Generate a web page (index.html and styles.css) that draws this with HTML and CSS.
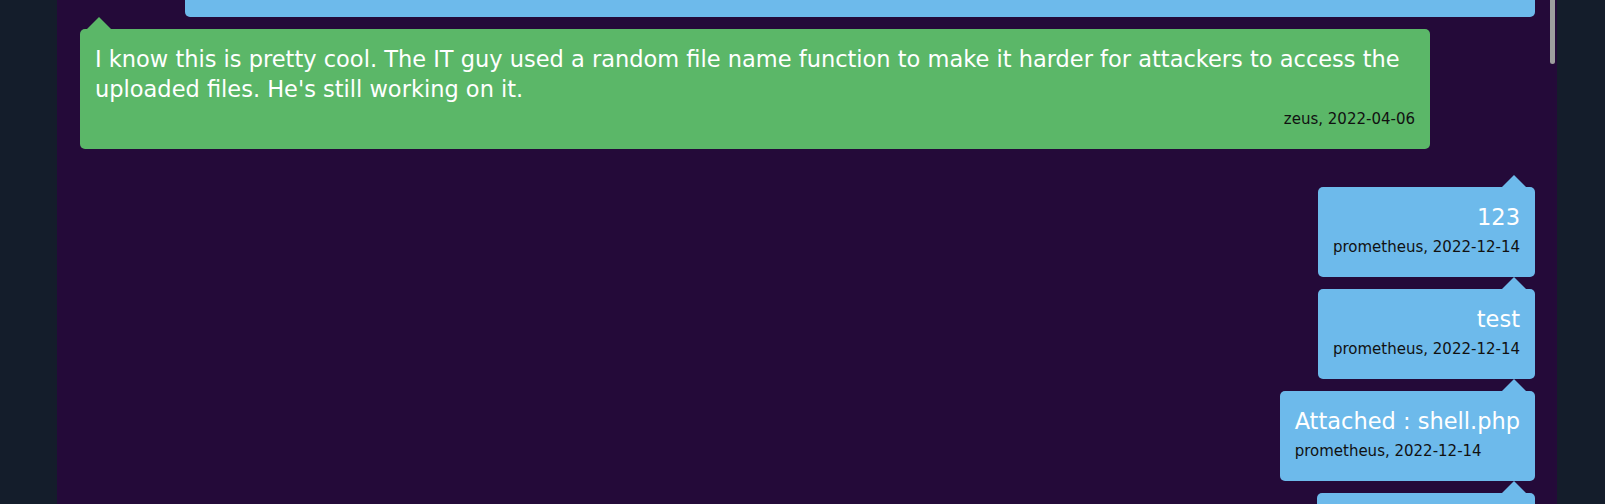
FILE: index.html
```html
<!DOCTYPE html>
<html lang="en">
<head>
<meta charset="utf-8">
<title>Messages</title>
<link rel="stylesheet" href="styles.css">
</head>
<body>
<div class="page">
  <aside class="side"></aside>
  <main class="chat">
    <div class="thread">
      <div class="bubble bubble-out bubble-cut"></div>
      <div class="bubble bubble-in">
        <p class="text">I know this is pretty cool. The IT guy used a random file name function to make it harder for attackers to access the uploaded files. He's still working on it.</p>
        <span class="meta">zeus, 2022-04-06</span>
      </div>
      <div class="bubble bubble-out bubble-first">
        <p class="text">123</p>
        <span class="meta">prometheus, 2022-12-14</span>
      </div>
      <div class="bubble bubble-out">
        <p class="text">test</p>
        <span class="meta">prometheus, 2022-12-14</span>
      </div>
      <div class="bubble bubble-out">
        <p class="text">Attached : shell.php</p>
        <span class="meta meta-left">prometheus, 2022-12-14</span>
      </div>
      <div class="bubble bubble-out bubble-tail"></div>
    </div>
    <div class="scroll-thumb"></div>
  </main>
  <aside class="side side-right"></aside>
</div>
</body>
</html>
```
FILE: styles.css
```css
html, body {
  margin: 0;
  padding: 0;
  height: 504px;
  overflow: hidden;
  background: #141d2b;
  font-family: "DejaVu Sans", "Liberation Sans", sans-serif;
}

.page {
  display: flex;
  height: 504px;
}

.side {
  width: 57px;
  flex: none;
  background: #141d2b;
}

.side-right {
  width: 48px;
}

.chat {
  position: relative;
  width: 1500px;
  flex: none;
  background: #240a39;
  overflow: hidden;
}

.thread {
  display: flex;
  flex-direction: column;
  gap: 12px;
  padding: 0 22px 0 23px;
}

.bubble {
  position: relative;
  max-width: 1350px;
  box-sizing: border-box;
  padding: 15px 15px;
  border-radius: 5px;
  color: #ffffff;
}

.bubble::before {
  content: "";
  position: absolute;
  top: -12px;
  width: 0;
  height: 0;
  border-left: 12px solid transparent;
  border-right: 12px solid transparent;
  border-bottom: 12px solid transparent;
}

.bubble-in {
  align-self: flex-start;
  background: #5bb768;
}

.bubble-in::before {
  left: 7px;
  border-bottom-color: #5bb768;
}

.bubble-out {
  align-self: flex-end;
  background: #6dbaeb;
  text-align: right;
}

.bubble-out::before {
  right: 9px;
  border-bottom-color: #6dbaeb;
}

.bubble-cut {
  width: 1350px;
  height: 17px;
  padding: 0;
  border-radius: 0 0 5px 5px;
}

.bubble-cut::before {
  display: none;
}

.bubble-first {
  margin-top: 26px;
}

.bubble-tail {
  width: 218px;
  height: 90px;
}

.text {
  margin: 0;
  font-size: 22.5px;
  line-height: 30px;
}

.meta {
  display: block;
  margin: 4px 0 4px;
  font-size: 15px;
  line-height: 22px;
  color: #111111;
  text-align: right;
}

.meta-left {
  text-align: left;
}

.scroll-thumb {
  position: absolute;
  top: 0;
  right: 2px;
  width: 5px;
  height: 64px;
  border-radius: 0 0 3px 3px;
  background: #9e9e9e;
}
```
